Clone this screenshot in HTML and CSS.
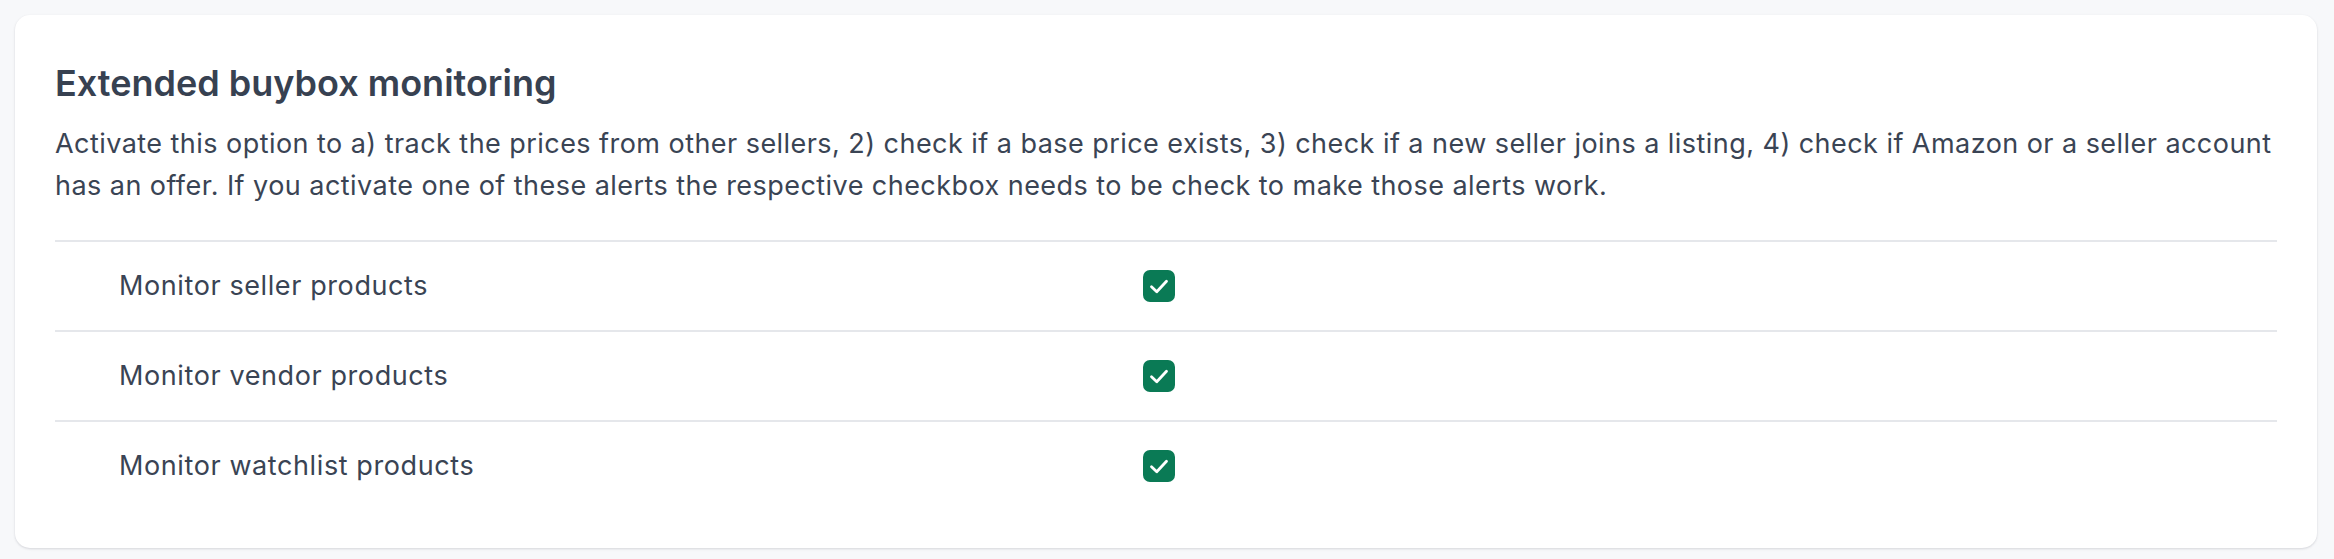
FILE: index.html
```html
<!DOCTYPE html>
<html lang="en">
<head>
<meta charset="utf-8">
<title>Extended buybox monitoring</title>
<link rel="stylesheet" href="styles.css">
</head>
<body>
<main class="page">
  <section class="card">
    <h2 class="card-title">Extended buybox monitoring</h2>
    <p class="card-desc">Activate this option to a) track the prices from other sellers, 2) check if a base price exists, 3) check if a new seller joins a listing, 4) check if Amazon or a seller account has an offer. If you activate one of these alerts the respective checkbox needs to be check to make those alerts work.</p>
    <div class="options">
      <div class="option-row">
        <span class="option-label">Monitor seller products</span>
        <span class="checkbox" role="checkbox" aria-checked="true">
          <svg viewBox="0 0 16 16" class="check"><path d="M4 8.4l2.8 2.7 5.2-5.6" /></svg>
        </span>
      </div>
      <div class="option-row">
        <span class="option-label">Monitor vendor products</span>
        <span class="checkbox" role="checkbox" aria-checked="true">
          <svg viewBox="0 0 16 16" class="check"><path d="M4 8.4l2.8 2.7 5.2-5.6" /></svg>
        </span>
      </div>
      <div class="option-row">
        <span class="option-label">Monitor watchlist products</span>
        <span class="checkbox" role="checkbox" aria-checked="true">
          <svg viewBox="0 0 16 16" class="check"><path d="M4 8.4l2.8 2.7 5.2-5.6" /></svg>
        </span>
      </div>
    </div>
  </section>
</main>
</body>
</html>
```

FILE: styles.css
```css
html, body {
  margin: 0;
  padding: 0;
  background: #f7f8fa;
}
body {
  font-family: Inter, "Noto Sans", "Liberation Sans", sans-serif;
  color: #374151;
}
.page {
  padding: 15px 17px 11px 15px;
}
.card {
  background: #ffffff;
  border-radius: 15px;
  box-shadow: 0 1px 3px rgba(17, 24, 39, 0.10), 0 1px 2px rgba(17, 24, 39, 0.05);
  padding: 44px 40px 38px 40px;
}
.card-title {
  margin: 0;
  font-size: 36px;
  line-height: 48px;
  font-weight: 600;
  color: #374151;
}
.card-desc {
  margin: 16px 0 0 0;
  font-size: 27px;
  line-height: 42px;
  letter-spacing: 0.45px;
  color: #3a4454;
}
.options {
  margin-top: 33px;
}
.option-row {
  display: grid;
  grid-template-columns: 1088px 1fr;
  align-items: center;
  height: 90px;
  border-top: 2px solid #e5e7eb;
  box-sizing: border-box;
}
.option-label {
  padding-left: 64px;
  font-size: 27px;
  line-height: 40px;
  letter-spacing: 0.6px;
  color: #3a4454;
}
.checkbox {
  width: 32px;
  height: 32px;
  border-radius: 7px;
  background: #0a7a55;
  display: flex;
  align-items: center;
  justify-content: center;
}
.check {
  width: 30px;
  height: 30px;
  fill: none;
  stroke: #ffffff;
  stroke-width: 1.5;
  stroke-linecap: round;
  stroke-linejoin: round;
}
```
